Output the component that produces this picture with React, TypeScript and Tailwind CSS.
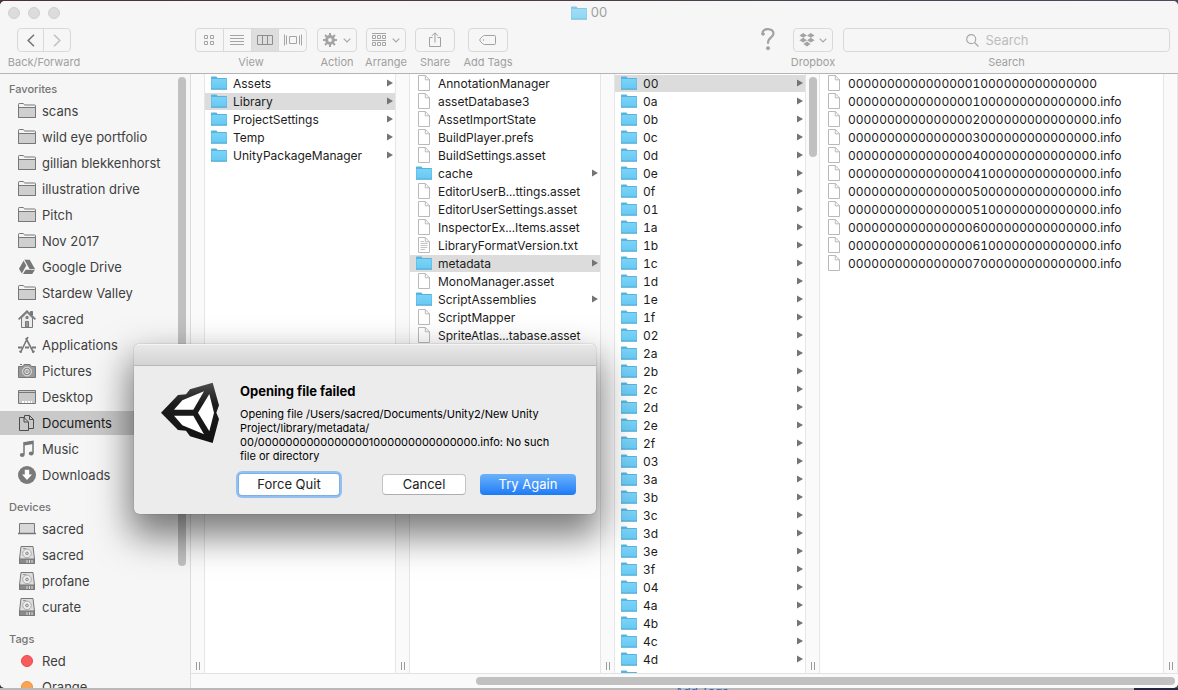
import { useState } from 'react';
import type { ReactNode } from 'react';
import clsx from 'clsx';

type Entry = { name: string; kind: 'folder' | 'file' | 'text' };

const folder = (name: string): Entry => ({ name, kind: 'folder' });
const file = (name: string): Entry => ({ name, kind: 'file' });

const projectItems = ['Assets', 'Library', 'ProjectSettings', 'Temp', 'UnityPackageManager'].map(folder);

const libraryItems: Entry[] = [
  file('AnnotationManager'),
  file('assetDatabase3'),
  file('AssetImportState'),
  file('BuildPlayer.prefs'),
  file('BuildSettings.asset'),
  folder('cache'),
  file('EditorUserB...ttings.asset'),
  file('EditorUserSettings.asset'),
  file('InspectorEx...Items.asset'),
  { name: 'LibraryFormatVersion.txt', kind: 'text' },
  folder('metadata'),
  file('MonoManager.asset'),
  folder('ScriptAssemblies'),
  file('ScriptMapper'),
  file('SpriteAtlas...tabase.asset'),
];

const metadataItems = [
  '00', '0a', '0b', '0c', '0d', '0e', '0f', '01', '1a', '1b', '1c', '1d', '1e', '1f', '02', '2a', '2b',
  '2c', '2d', '2e', '2f', '03', '3a', '3b', '3c', '3d', '3e', '3f', '04', '4a', '4b', '4c', '4d', '4e',
].map(folder);

const infoItems = [
  '00000000000000001000000000000000',
  '00000000000000001000000000000000.info',
  '00000000000000002000000000000000.info',
  '00000000000000003000000000000000.info',
  '00000000000000004000000000000000.info',
  '00000000000000004100000000000000.info',
  '00000000000000005000000000000000.info',
  '00000000000000005100000000000000.info',
  '00000000000000006000000000000000.info',
  '00000000000000006100000000000000.info',
  '00000000000000007000000000000000.info',
].map(file);

const FolderIcon = () => (
  <svg width="16" height="14" viewBox="0 0 16 14" className="shrink-0">
    <defs>
      <linearGradient id="folderBlue" x1="0" y1="0" x2="0" y2="1">
        <stop offset="0" stopColor="#7dd2f6" />
        <stop offset="1" stopColor="#66caf4" />
      </linearGradient>
    </defs>
    <path d="M0 1.2Q0 .5.7.5H5.4L6.6 2H15.3Q16 2 16 2.7V13.5H0Z" fill="#58b4de" />
    <path d="M.5 3H15.5V12.7H.5Z" fill="url(#folderBlue)" />
    <path d="M0 13.2H16" stroke="#4fa6d0" strokeWidth=".8" />
  </svg>
);

const FileIcon = ({ lined }: { lined: boolean }) => (
  <svg width="16" height="16" viewBox="0 0 16 16" fill="none" stroke="#b9b9b9" className="shrink-0">
    <path d="M2.5.5H9.3L13.5 4.8V15.5H2.5Z" fill="#fff" />
    <path d="M9.3.5V4.8H13.5" />
    {lined && <path d="M4.5 4.5H8M4.5 6.5H11.5M4.5 8.5H11.5M4.5 10.5H11.5M4.5 12.5H9" stroke="#c4c4c4" />}
  </svg>
);

const SideFolder = () => (
  <>
    <path d="M.5 15.5V2.3Q.5 1.5 1.3 1.5H5.2L6.8 3H16.6Q17.5 3 17.5 3.8V15.5Z" fill="#f4f4f4" />
    <path d="M.5 5.5H17.5V15.5H.5Z" fill="#cfcfcf" />
  </>
);

const Drive = () => (
  <>
    <path d="M3 .5H15L16.5 13V17.5H1.5V13Z" fill="#dedede" />
    <path d="M1.5 13H16.5V17.5H1.5Z" fill="#8a8a8a" />
    <path d="M9 14V17M11.5 14V17M14 14V17" stroke="#dcdcdc" />
    <circle cx="9" cy="7.4" r="4.3" fill="#ededed" stroke="#999" strokeWidth=".8" />
    <circle cx="9" cy="7.4" r="1.4" fill="#ccc" strokeWidth=".7" />
    <path d="M5 2.5H8" stroke="#999" />
  </>
);

const sideIcons: Record<string, ReactNode> = {
  folder: <SideFolder />,
  drive: <Drive />,
  gdrive: (
    <g fill="#777" stroke="none">
      <path d="M6.3 1.8H11.7L17 11H11.6Z" />
      <path d="M5.5 2.8L8.3 7.5L3.8 15.5L1 10.8Z" />
      <path d="M7.6 11.8H17L14.2 16H5Z" />
    </g>
  ),
  home: (
    <>
      <path d="M12.5 1.5H14.5V5H12.5Z" fill="#777" />
      <path d="M3.5 8V17.5H14.5V8L9 2.5Z" fill="#ececec" />
      <path d="M.6 9.4L9 1.2L17.4 9.4" strokeWidth="1.7" />
      <path d="M7.5 11.5H10.5V17H7.5ZM8 6.5H10V8.5H8Z" fill="#999" />
    </>
  ),
  apps: (
    <g strokeWidth="1.6">
      <path d="M10 1L2.5 16.5M7.8 2L15.5 16.5" />
      <path d="M0 11.5H4M7 11.5H11M14 11.5H18" strokeWidth="2.2" />
      <path d="M1.5 15L3.5 16.5M16.5 15L14.5 16.5" />
    </g>
  ),
  camera: (
    <>
      <path d="M.5 4.5H4.5L6 2.5H12L13.5 4.5H17.5V15.5H.5Z" fill="#9a9a9a" />
      <path d="M2 2.5H4" />
      <circle cx="9" cy="9.5" r="4.4" fill="#8c8c8c" stroke="#ececec" />
      <circle cx="9" cy="9.5" r="2.2" fill="#aaa" stroke="#e0e0e0" />
    </>
  ),
  desktop: (
    <>
      <path d="M.5 2.5H17.5V15.5H.5Z" fill="#c9c9c9" />
      <path d="M1 4.5H17" />
      <path d="M4 14H14" stroke="#fff" strokeWidth="2" strokeDasharray="2 1" />
    </>
  ),
  docs: (
    <g stroke="#4c4c4c">
      <path d="M6.5 1.5H11.5L15.5 5.5V14.5H6.5Z" fill="#c9c9c9" />
      <path d="M11.5 1.5V5.5H15.5" />
      <path d="M1.5 3.5H6L10.5 8V16.5H1.5Z" fill="#c9c9c9" />
      <path d="M6 3.5V8H10.5" />
    </g>
  ),
  music: (
    <>
      <path d="M6 14.5V3L15 1.5V13" strokeWidth="1.5" />
      <path d="M6 4L15 2.5" strokeWidth="3" />
      <ellipse cx="4.2" cy="15" rx="2.4" ry="1.9" fill="#777" stroke="none" />
      <ellipse cx="13.2" cy="13.5" rx="2.4" ry="1.9" fill="#777" stroke="none" />
    </>
  ),
  download: (
    <>
      <circle cx="9" cy="9" r="9" fill="#7a7a7a" stroke="none" />
      <path d="M6.8 3.8H11.2V8.6H14L9 14L4 8.6H6.8Z" fill="#fff" stroke="none" />
    </>
  ),
  laptop: (
    <>
      <path d="M1.5 3.5H16.5V13.5H1.5Z" fill="#d8d8d8" />
      <path d="M0 13.5H18" strokeWidth="1.6" />
    </>
  ),
  red: <circle cx="9" cy="9" r="5.5" fill="#fc5b5e" stroke="#e8484c" />,
  orange: <circle cx="9" cy="9" r="5.5" fill="#faa457" stroke="#e99144" />,
};

const sections = [
  {
    title: 'Favorites',
    items: [
      ['folder', 'scans'],
      ['folder', 'wild eye portfolio'],
      ['folder', 'gillian blekkenhorst'],
      ['folder', 'illustration drive'],
      ['folder', 'Pitch'],
      ['folder', 'Nov 2017'],
      ['gdrive', 'Google Drive'],
      ['folder', 'Stardew Valley'],
      ['home', 'sacred'],
      ['apps', 'Applications'],
      ['camera', 'Pictures'],
      ['desktop', 'Desktop'],
      ['docs', 'Documents'],
      ['music', 'Music'],
      ['download', 'Downloads'],
    ],
  },
  {
    title: 'Devices',
    items: [
      ['laptop', 'sacred'],
      ['drive', 'sacred'],
      ['drive', 'profane'],
      ['drive', 'curate'],
    ],
  },
  {
    title: 'Tags',
    items: [
      ['red', 'Red'],
      ['orange', 'Orange'],
    ],
  },
];

const Sidebar = () => (
  <aside className="flex w-[191px] shrink-0 overflow-hidden border-r border-[#dcdcdc] bg-[#f6f6f6]">
    <nav className="flex min-w-0 flex-1 flex-col gap-1">
      {sections.map((section) => (
        <div key={section.title} className="flex flex-col">
          <h2 className="pt-1.5 pl-[9px] text-[11px] leading-[18px] font-medium text-[#747474]">{section.title}</h2>
          {section.items.map(([icon, label], i) => (
            <a
              key={i}
              href="#"
              className={clsx(
                'my-px flex h-6 items-center gap-1.5 pl-[18px] text-[13px] whitespace-nowrap',
                label === 'Documents' ? '-mr-3 bg-[#c9c9c9] text-[#1a1a1a]' : 'text-[#3f3f3f]',
              )}
            >
              <svg width="18" height="18" viewBox="0 0 18 18" fill="none" stroke="#777" className="shrink-0">
                {sideIcons[icon]}
              </svg>
              <span className="pt-0.5">{label}</span>
            </a>
          ))}
        </div>
      ))}
    </nav>
    <div className="w-3 shrink-0 pt-[3px]">
      <div className="h-[80%] w-2 rounded-full bg-[#c1c1c1]" />
    </div>
  </aside>
);

const Gutter = ({ thumb = false }: { thumb?: boolean }) => (
  <div className="flex w-[15px] shrink-0 flex-col items-center justify-between border-x border-[#e6e6e6] bg-[#fafafa] py-[3px]">
    <div className={clsx('h-20 w-2 rounded-full', thumb && 'bg-[#c1c1c1]')} />
    <div className="h-2 w-1 border-x border-[#9b9b9b]" />
  </div>
);

const Column = ({ items, selected, last = false }: { items: Entry[]; selected?: string; last?: boolean }) => (
  <div className={clsx('overflow-hidden pt-px', last ? 'min-w-0 flex-1' : 'w-[190px] shrink-0')}>
    {items.map((item) => (
      <button
        key={item.name}
        className={clsx(
          'mb-px flex h-[17px] w-full items-center gap-1.5 pr-0.5 pb-px pl-1.5 text-left text-[12px] leading-4 whitespace-nowrap text-[#1c1c1c] tabular-nums',
          item.name === selected && 'bg-[#dcdcdc]',
        )}
      >
        {item.kind === 'folder' ? <FolderIcon /> : <FileIcon lined={item.kind === 'text'} />}
        <span className="flex-1 pt-px">{item.name}</span>
        {item.kind === 'folder' && (
          <svg width="6" height="8" viewBox="0 0 6 8" fill="#747474">
            <path d="M0 .5L6 4L0 7.5Z" />
          </svg>
        )}
      </button>
    ))}
  </div>
);

const Tool = ({ label, className, children }: { label: string; className?: string; children: ReactNode }) => (
  <div className={clsx('flex shrink-0 flex-col items-center gap-0.5', className)}>
    {children}
    <span className="text-[11px] leading-4 whitespace-nowrap text-[#a0a0a0]">{label}</span>
  </div>
);

const box = 'flex h-6 items-center justify-center border border-[#d9d9d9]';

const Chevron = () => (
  <svg width="8" height="5" viewBox="0 0 8 5" fill="none" stroke="#a8a8a8" strokeWidth="1.2">
    <path d="M.7.7L4 4L7.3.7" />
  </svg>
);

const viewIcons = [
  <path key="icons" d="M4.5 3.5H7.5V6.5H4.5ZM10.5 3.5H13.5V6.5H10.5ZM4.5 9.5H7.5V12.5H4.5ZM10.5 9.5H13.5V12.5H10.5Z" />,
  <path key="list" d="M2 3.5H16M2 6.5H16M2 9.5H16M2 12.5H16" />,
  <path key="columns" d="M1.5 3.5H16.5V12.5H1.5ZM6.5 3.5V12.5M11.5 3.5V12.5" stroke="#8d8d8d" />,
  <path key="flow" d="M5.5 4.5H12.5V11.5H5.5ZM.5 2.5V13.5M2.5 3.5V12.5M15.5 3.5V12.5M17.5 2.5V13.5" />,
];

const Toolbar = () => {
  const [view, setView] = useState(2);

  return (
    <div className="flex items-start pt-[3px] pr-2 pl-2">
      <Tool label="Back/Forward" className="w-[72px]">
        <div className="flex">
          <button aria-label="Back" className={clsx(box, 'w-[27px] rounded-l')}>
            <svg width="8" height="13" viewBox="0 0 8 13" fill="none" stroke="#777" strokeWidth="1.6">
              <path d="M7 .8L1.2 6.5L7 12.2" />
            </svg>
          </button>
          <button aria-label="Forward" className={clsx(box, '-ml-px w-7 rounded-r')}>
            <svg width="8" height="13" viewBox="0 0 8 13" fill="none" stroke="#c2c2c2" strokeWidth="1.6">
              <path d="M1 .8L6.8 6.5L1 12.2" />
            </svg>
          </button>
        </div>
      </Tool>
      <Tool label="View" className="ml-[115px] w-28">
        <div className="flex w-full divide-x divide-[#d9d9d9] overflow-hidden rounded border border-[#d9d9d9]">
          {viewIcons.map((icon, i) => (
            <button
              key={i}
              aria-label={`View ${i + 1}`}
              onClick={() => setView(i)}
              className={clsx('flex h-[22px] flex-1 items-center justify-center', view === i && 'bg-[#dedede]')}
            >
              <svg width="18" height="16" viewBox="0 0 18 16" fill="none" stroke="#a4a4a4">
                {icon}
              </svg>
            </button>
          ))}
        </div>
      </Tool>
      <Tool label="Action" className="ml-2.5 w-10">
        <button aria-label="Action" className={clsx(box, 'w-full gap-1.5 rounded')}>
          <svg width="14" height="14" viewBox="0 0 14 14" fill="none" stroke="#a4a4a4">
            <circle cx="7" cy="7" r="3.4" strokeWidth="3" />
            <path
              d="M7 0V3M7 11V14M0 7H3M11 7H14M2.05 2.05L4 4M10 10L11.95 11.95M11.95 2.05L10 4M4 10L2.05 11.95"
              strokeWidth="2"
            />
          </svg>
          <Chevron />
        </button>
      </Tool>
      <Tool label="Arrange" className="ml-[9px] w-10">
        <button aria-label="Arrange" className={clsx(box, 'w-full gap-1.5 rounded')}>
          <svg width="14" height="14" viewBox="0 0 14 14" fill="none" stroke="#a4a4a4">
            <path d="M0 .5H14M0 7.5H14M.5 2.5H3.5V5.5H.5ZM5.5 2.5H8.5V5.5H5.5ZM10.5 2.5H13.5V5.5H10.5ZM.5 9.5H3.5V12.5H.5ZM5.5 9.5H8.5V12.5H5.5ZM10.5 9.5H13.5V12.5H10.5Z" />
          </svg>
          <Chevron />
        </button>
      </Tool>
      <Tool label="Share" className="ml-[9px] w-10">
        <button aria-label="Share" className={clsx(box, 'w-full rounded')}>
          <svg width="12" height="16" viewBox="0 0 12 16" fill="none" stroke="#a0a0a0">
            <path d="M3.5 5.5H.5V14.5H11.5V5.5H8.5M6 10.5V1M3 3.8L6 .8L9 3.8" />
          </svg>
        </button>
      </Tool>
      <Tool label="Add Tags" className="ml-[13px] w-10">
        <button aria-label="Add Tags" className={clsx(box, 'w-full rounded')}>
          <svg width="18" height="12" viewBox="0 0 18 12" fill="none" stroke="#a0a0a0">
            <path d="M5.5 1.5H15.5Q16.5 1.5 16.5 2.5V9.5Q16.5 10.5 15.5 10.5H5.5Q4.5 10.5 3.8 9.8L1.2 7.2Q.3 6 1.2 4.8L3.8 2.2Q4.5 1.5 5.5 1.5Z" />
            <circle cx="4.5" cy="6" r=".7" fill="#a0a0a0" stroke="none" />
          </svg>
        </button>
      </Tool>
      <button aria-label="Help" className="mr-[17px] ml-auto">
        <svg width="16" height="24" viewBox="0 0 16 24" fill="none" stroke="#a2a2a2" strokeLinecap="round">
          <path d="M2.5 6.2C2 2.6 4.8 1.1 7.8 1.1C11.4 1.1 13.9 3 13.4 6C12.9 9.6 8 9.6 8 15" strokeWidth="2.2" />
          <circle cx="3.1" cy="6" r="1.2" fill="#a2a2a2" />
          <circle cx="8" cy="20.2" r="1.6" fill="#a2a2a2" strokeWidth=".8" />
        </svg>
      </button>
      <Tool label="Dropbox" className="w-10">
        <button aria-label="Dropbox" className={clsx(box, 'w-full gap-1 rounded')}>
          <svg width="16" height="14" viewBox="0 0 16 14" fill="#a4a4a4">
            <path d="M4.2 0L8 2.4L4.2 4.8L.4 2.4ZM11.8 0L15.6 2.4L11.8 4.8L8 2.4ZM4.2 4.8L8 7.2L4.2 9.6L.4 7.2ZM11.8 4.8L15.6 7.2L11.8 9.6L8 7.2ZM8 8.6L11.6 11L8 13.4L4.4 11Z" />
          </svg>
          <Chevron />
        </button>
      </Tool>
      <Tool label="Search" className="ml-2.5 w-[327px]">
        <label className={clsx(box, 'w-full gap-1.5 rounded pr-[18px]')}>
          <svg width="13" height="13" viewBox="0 0 13 13" fill="none" stroke="#a8a8a8" strokeWidth="1.2">
            <circle cx="5.2" cy="5.2" r="4.5" />
            <path d="M8.5 8.5L12.5 12.5" />
          </svg>
          <input
            aria-label="Search"
            placeholder="Search"
            className="field-sizing-content text-[13px] leading-5 text-[#444] outline-none placeholder:text-[#bdbdbd]"
          />
        </label>
      </Tool>
    </div>
  );
};

const UnityLogo = () => (
  <svg width="58" height="62" viewBox="93 127 174 186">
    <defs>
      <linearGradient id="unityBody" x1="0" y1="0" x2="0" y2="1">
        <stop offset="0" stopColor="#4c4c4c" />
        <stop offset=".35" stopColor="#1c1c1c" />
        <stop offset="1" stopColor="#111" />
      </linearGradient>
    </defs>
    <path
      d="M93 219L144 166L168 164L180 149L248 129L267 197L259 219L267 238L248 310L180 290L168 273L144 271Z"
      fill="url(#unityBody)"
    />
    <path d="M132 210L157 182L222 155L190 210Z" fill="#fff" />
    <path d="M132 228H190L222 284L157 257Z" fill="#fff" />
    <path d="M204 219L238 163L252 219L238 275Z" fill="#fff" />
  </svg>
);

const ErrorDialog = () => (
  <div
    role="alertdialog"
    aria-labelledby="dialog-title"
    className="absolute top-[344px] left-[134px] w-[462px] rounded-[5px] bg-[#ececec] shadow-[0_0_1px_rgba(0,0,0,0.6),0_18px_36px_4px_rgba(0,0,0,0.52)]"
  >
    <div className="h-[22px] rounded-t-[5px] border-t border-b border-t-[#f4f4f4] border-b-[#b8b8b8] bg-linear-to-b from-[#e8e8e8] to-[#d3d3d3]" />
    <div className="flex gap-[21px] pt-4 pr-5 pb-[19px] pl-[27px]">
      <UnityLogo />
      <div className="flex-1">
        <h1 id="dialog-title" className="text-[13px] leading-[18px] font-bold text-black">
          Opening file failed
        </h1>
        <p className="mt-[7px] text-[11px] leading-[14px] whitespace-nowrap text-black">
          Opening file /Users/sacred/Documents/Unity2/New Unity
          <br />
          Project/library/metadata/
          <br />
          00/00000000000000001000000000000000.info: No such
          <br />
          file or directory
        </p>
        <div className="mt-[11px] flex h-[21px] text-[13px] text-[#222]">
          <button className="-ml-px w-[100px] rounded-[3px] bg-white shadow-[0_0_0_1px_#7fb0e4,0_0_0_3px_#93c0f2]">
            Force Quit
          </button>
          <button className="ml-auto w-[84px] rounded border border-[#c4c4c4] border-b-[#aeaeae] bg-white">Cancel</button>
          <button className="ml-3.5 w-24 rounded bg-linear-to-b from-[#6bb2fa] to-[#1a7af6] text-white">
            Try Again
          </button>
        </div>
      </div>
    </div>
  </div>
);

const App = () => (
  <div className="relative flex h-screen flex-col overflow-hidden bg-linear-to-r from-[#4a3038] to-[#4c4a5c] pt-px font-['Inter','Liberation_Sans',sans-serif]">
    <main className="flex min-h-0 flex-1 flex-col overflow-hidden rounded-[5px] bg-white">
      <header className="h-[73px] shrink-0 border-b border-[#b4b4b4] bg-[#f6f6f6]">
        <div className="grid h-6 grid-cols-3 items-center">
          <div className="flex gap-2 pl-2">
            <span className="size-3 rounded-full border border-[#d0d0d0] bg-[#dcdcdc]" />
            <span className="size-3 rounded-full border border-[#d0d0d0] bg-[#dcdcdc]" />
            <span className="size-3 rounded-full border border-[#d0d0d0] bg-[#dcdcdc]" />
          </div>
          <div className="flex items-center justify-center gap-1 text-[13px] text-[#a0a0a0]">
            <span className="opacity-70">
              <FolderIcon />
            </span>
            00
          </div>
        </div>
        <Toolbar />
      </header>
      <div className="flex min-h-0 flex-1">
        <Sidebar />
        <div className="flex min-w-0 flex-1 flex-col">
          <div className="flex min-h-0 flex-1">
            <div className="flex w-3.5 shrink-0 flex-col items-center justify-end border-r border-[#e6e6e6] bg-[#fafafa] pb-[3px]">
              <div className="h-2 w-1 border-x border-[#9b9b9b]" />
            </div>
            <Column items={projectItems} selected="Library" />
            <Gutter />
            <Column items={libraryItems} selected="metadata" />
            <Gutter />
            <Column items={metadataItems} selected="00" />
            <Gutter thumb />
            <Column items={infoItems} last />
            <Gutter />
          </div>
          <div className="h-[15px] shrink-0 border-t border-[#e2e2e2] bg-[#fafafa] pt-[3px] pr-[3px]">
            <div className="ml-auto h-2 w-[71%] rounded-full bg-[#c1c1c1]" />
          </div>
        </div>
      </div>
    </main>
    <div className="flex h-0.5 shrink-0 overflow-hidden bg-[#b9b9b9]">
      <span className="w-[57.3%]" />
      <a href="#" className="text-[12px] leading-[8px] text-[#2a63c8]">
        Add Tags
      </a>
      <span className="ml-auto w-11 bg-[#232743]" />
    </div>
    <ErrorDialog />
  </div>
);

export default App;
